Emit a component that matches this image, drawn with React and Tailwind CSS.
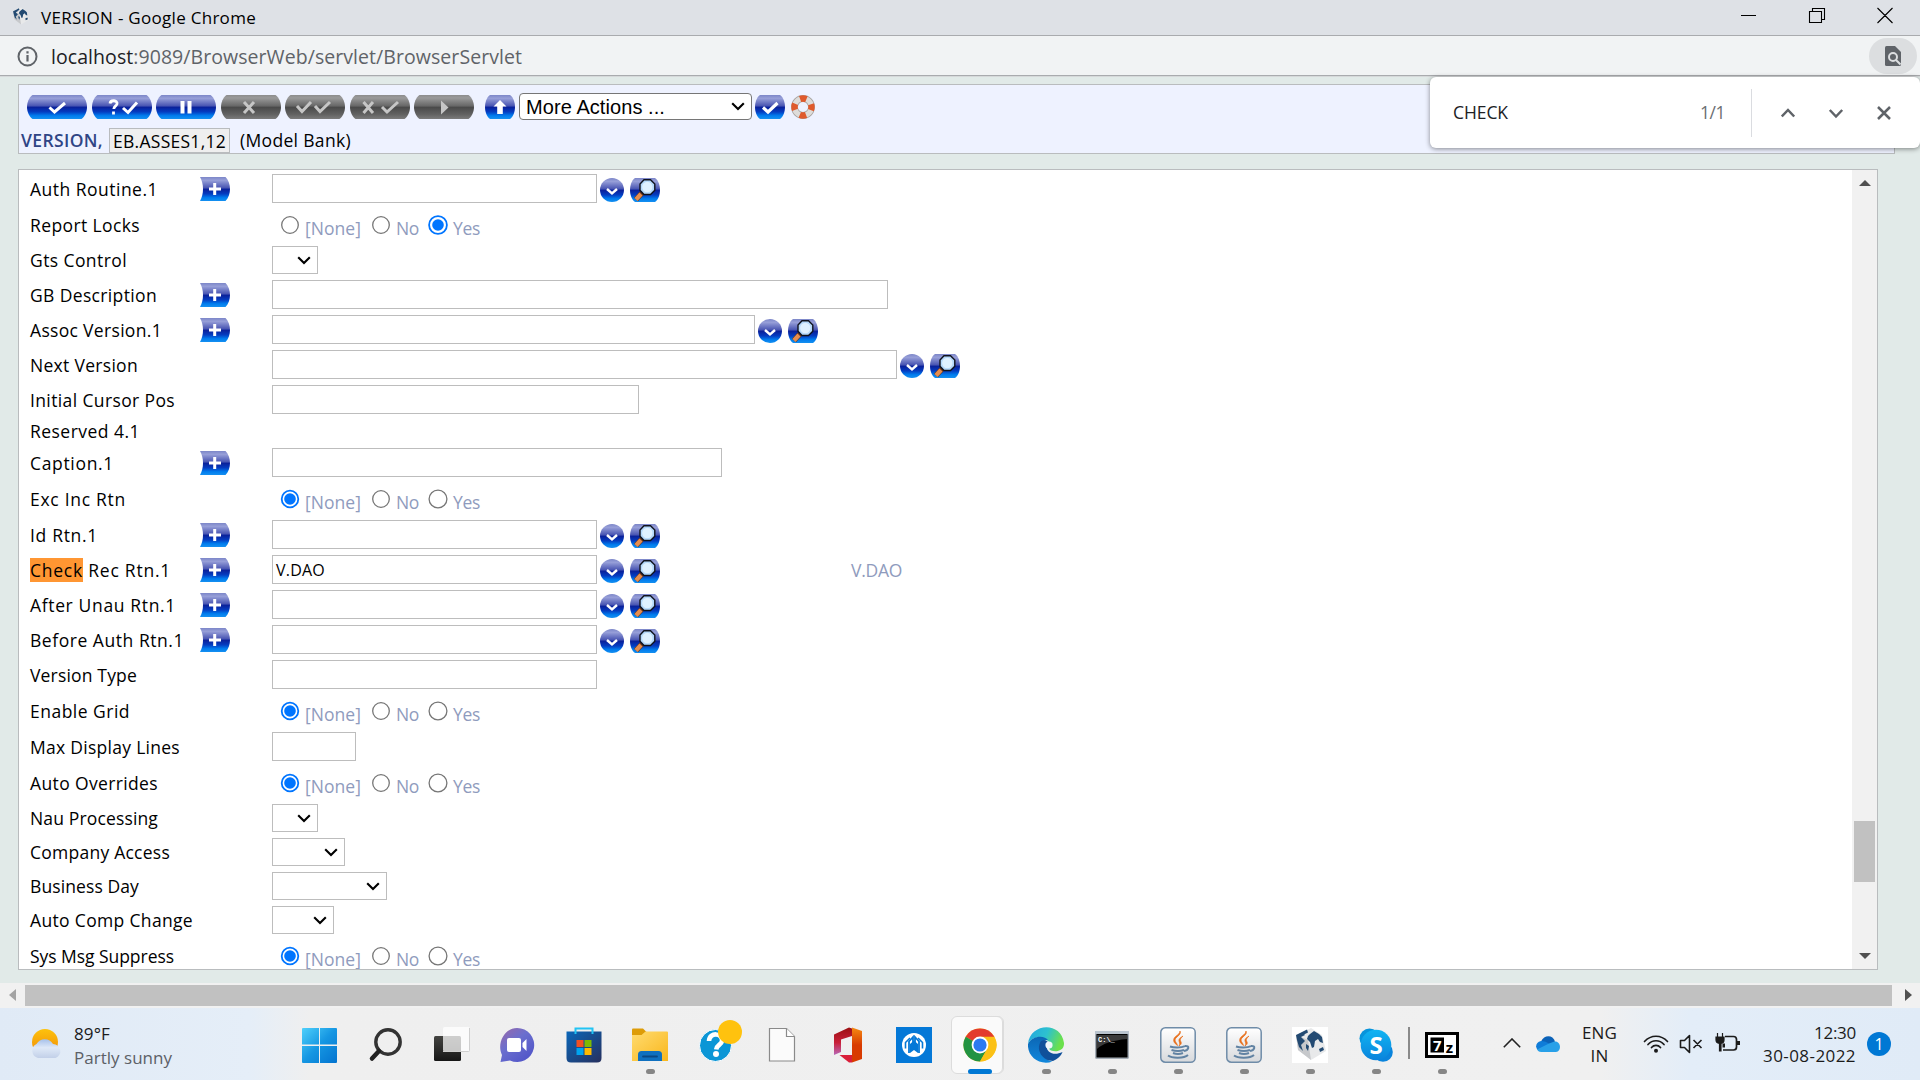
import { useLayoutEffect, useRef, useState } from "react";

/* Text tracked so that it fills a given width */
function Fit({ w, className = "", children }) {
  const ref = useRef(null);
  const [ls, setLs] = useState(0);
  useLayoutEffect(() => {
    const el = ref.current;
    const n = el.textContent.length;
    setLs((w - el.getBoundingClientRect().width) / n);
  }, [w]);
  return (
    <span ref={ref} className={"inline-block whitespace-pre " + className} style={{ letterSpacing: ls }}>
      {children}
    </span>
  );
}

function Defs() {
  return (
    <svg className="absolute h-0 w-0" aria-hidden="true">
      <defs>
        <linearGradient id="blue" x1="0" y1="0" x2="0" y2="1">
          <stop offset="0" stopColor="#7c86c8" />
          <stop offset=".14" stopColor="#979fd8" />
          <stop offset=".44" stopColor="#4c58b4" />
          <stop offset=".52" stopColor="#0a229c" />
          <stop offset=".7" stopColor="#043cc0" />
          <stop offset=".86" stopColor="#007cee" />
          <stop offset="1" stopColor="#1590f0" />
        </linearGradient>
        <linearGradient id="grey" x1="0" y1="0" x2="0" y2="1">
          <stop offset="0" stopColor="#8c8c8c" />
          <stop offset=".12" stopColor="#9a9a9a" />
          <stop offset=".45" stopColor="#686868" />
          <stop offset=".52" stopColor="#4a4a4a" />
          <stop offset=".8" stopColor="#616161" />
          <stop offset="1" stopColor="#7b7b7b" />
        </linearGradient>
        <linearGradient id="win" x1="0" y1="0" x2="1" y2="1">
          <stop offset="0" stopColor="#4fd0fb" />
          <stop offset=".5" stopColor="#1596e2" />
          <stop offset="1" stopColor="#0373cf" />
        </linearGradient>
        <linearGradient id="dark" x1="0" y1="0" x2="0" y2="1">
          <stop offset="0" stopColor="#444441" />
          <stop offset="1" stopColor="#161616" />
        </linearGradient>
        <linearGradient id="chat" x1="0" y1="0" x2=".8" y2="1">
          <stop offset="0" stopColor="#9a68a8" />
          <stop offset=".45" stopColor="#6b6fce" />
          <stop offset="1" stopColor="#5054c8" />
        </linearGradient>
        <linearGradient id="store" x1="0" y1="0" x2="1" y2="1">
          <stop offset="0" stopColor="#0a66b8" />
          <stop offset="1" stopColor="#27305e" />
        </linearGradient>
        <linearGradient id="folder" x1="0" y1="0" x2="1" y2="1">
          <stop offset="0" stopColor="#ffdb70" />
          <stop offset="1" stopColor="#f9b71c" />
        </linearGradient>
        <linearGradient id="officeL" x1="0" y1="0" x2="0" y2="1">
          <stop offset="0" stopColor="#9b0f12" />
          <stop offset=".55" stopColor="#c92039" />
          <stop offset="1" stopColor="#b868b8" />
        </linearGradient>
        <linearGradient id="officeR" x1="0" y1="0" x2="0" y2="1">
          <stop offset="0" stopColor="#f58a12" />
          <stop offset=".5" stopColor="#d83b01" />
          <stop offset="1" stopColor="#d83b01" />
        </linearGradient>
        <linearGradient id="edgeA" x1="0" y1="0" x2="1" y2=".3">
          <stop offset="0" stopColor="#22a6e0" />
          <stop offset=".55" stopColor="#2dc1cf" />
          <stop offset="1" stopColor="#6be04c" />
        </linearGradient>
        <linearGradient id="edgeB" x1="0" y1="0" x2="0" y2="1">
          <stop offset="0" stopColor="#0c66b4" />
          <stop offset="1" stopColor="#1187dc" />
        </linearGradient>
        <linearGradient id="java" x1="0" y1="0" x2="0" y2="1">
          <stop offset="0" stopColor="#ffffff" />
          <stop offset="1" stopColor="#d7d9dc" />
        </linearGradient>
        <linearGradient id="skype" x1="0" y1="0" x2="0" y2="1">
          <stop offset="0" stopColor="#10b4f2" />
          <stop offset="1" stopColor="#0a84dc" />
        </linearGradient>
        <linearGradient id="sun" x1="0" y1="0" x2="0" y2="1">
          <stop offset="0" stopColor="#fdc20c" />
          <stop offset="1" stopColor="#f08a0a" />
        </linearGradient>
        <linearGradient id="cloud" x1="0" y1="0" x2="0" y2="1">
          <stop offset="0" stopColor="#a6c0ea" />
          <stop offset=".45" stopColor="#dfe9f8" />
          <stop offset="1" stopColor="#c2d0e8" />
        </linearGradient>
      </defs>
    </svg>
  );
}

const marks = {
  tick: <path d="M22.500 12.500l5 4.500L38 8" strokeWidth="3" fill="none" />,
  help: (
    <>
      <path d="M18 8.500c.5-4 8-3.500 7 .5-.5 2-3 2-3.200 5M21.500 16.500v3" strokeWidth="2.800" fill="none" />
      <path d="M31 13l5 4.500L45 7.500" strokeWidth="3" fill="none" />
    </>
  ),
  pause: <path d="M26.500 6v12.500M33.500 6v12.500" strokeWidth="4" fill="none" />,
  cross: <path d="M23 7l10 11M33 7L23 18" strokeWidth="3" fill="none" />,
  ticks: <path d="M12 11l5 5.500L26 7M30 11l5 5.500L45 7" strokeWidth="3" fill="none" />,
  crosstick: <path d="M13.500 7l9.500 11M23 7l-9.500 11M32 12l5 5L48 7" strokeWidth="3" fill="none" />,
  play: <path d="M27 5.500L34.500 12.500L27 19.500z" stroke="none" />,
};

function Pill({ mark, off }) {
  const c = off ? "#c6c6c6" : "#fff";
  return (
    <svg width="60" height="24" viewBox="0 0 60 24">
      <path
        d="M5.500 0h49C58 2.500 60 7.500 60 12s-2 9.500-5.500 12h-49C2 21.500 0 16.500 0 12S2 2.500 5.500 0z"
        fill={off ? "url(#grey)" : "url(#blue)"}
      />
      <g stroke={c} fill={c}>{marks[mark]}</g>
    </svg>
  );
}

function Orb({ children }) {
  return (
    <svg width="30" height="24" viewBox="0 0 30 24" className="shrink-0">
      <path d="M5 0h20c3.500 2.500 5 7.500 5 12s-1.500 9.500-5 12H5C1.500 21.500 0 16.500 0 12S1.500 2.500 5 0z" fill="url(#blue)" />
      {children}
    </svg>
  );
}

const Plus = () => (
  <svg width="30" height="24" viewBox="0 0 30 24" className="mt-1.5 block">
    <path d="M0 0h25.500C28.500 3 30 7.500 30 12s-1.500 9-4.500 12H0c4-7 4-17 0-24z" fill="url(#blue)" />
    <path d="M14.700 6v12M9 12h12" stroke="#fff" strokeWidth="3" />
  </svg>
);

const Drop = () => (
  <svg width="24" height="24" viewBox="0 0 24 24" className="ml-[3px] mt-[7px] block">
    <circle cx="12" cy="12" r="12" fill="url(#blue)" />
    <path d="M7 11l5 4.500 5-4.500" fill="none" stroke="#fff" strokeWidth="2.400" />
  </svg>
);

const Lens = () => (
  <div className="ml-1.5 mt-[7px]">
    <Orb>
      <path d="M12 15l-6 6.500" stroke="#6a3416" strokeWidth="5.400" />
      <path d="M11 16l-5 5.500" stroke="#e58d50" strokeWidth="4.200" />
      <path d="M14 1.700h6.500l4.300 4.300v6.200l-4.300 4.300H14l-4-4.300V6z" fill="#b4d8fa" stroke="#10131d" strokeWidth="1.400" />
      <circle cx="17.300" cy="9" r="5.200" fill="#dff1ff" />
    </Orb>
  </div>
);

const Chevron = ({ className = "" }) => (
  <svg width="14" height="9" viewBox="0 0 14 9" className={className}>
    <path d="M1.200 1.200L7 7l5.800-5.800" fill="none" stroke="#000" strokeWidth="2.100" />
  </svg>
);

function Globe({ size }) {
  return (
    <svg width={size} height={size} viewBox="0 0 36 36" className="shrink-0">
      <path d="M4 8L19 1l11 7 4 16-15 9L6 23z" fill="#e8e9ea" />
      <path d="M4 8l12 5 3 20L6 23z" fill="#c6c8cb" />
      <path d="M4 8l6-3 3 3-4 2 4 4-4 4 2 6-4-4-2-7zM10 5l5-2.500 1 3-4 2zM18 7l4-3 5 3 3 3 1 6-3-1-2-3-3 2-1 6-2 1-2-6-3-3 1-3zM27 22l4-2 1 3-4 2zM14 17l3 2-1 5-2-3z" fill="#234a72" />
    </svg>
  );
}

function Radio({ on, big }) {
  const r = big ? 8.9 : 8.3;
  return (
    <svg width="20" height="20" viewBox="0 0 20 20" className="block shrink-0">
      <circle cx="10" cy="10" r={r} fill="#fff" stroke={on ? "#0075ff" : "#767676"} strokeWidth={on ? 1.8 : 1.3} />
      {on && <circle cx="10" cy="10" r="5.800" fill="#0075ff" />}
    </svg>
  );
}

const opt = "mt-[10px] text-[17.500px] leading-6 text-[#8f9bbd]";
function Radios({ value }) {
  return (
    <div className="flex">
      <div className="ml-2 mt-[9px]"><Radio on={value === 0} /></div>
      <div className="ml-[5px] w-[58px]"><Fit w={56} className={opt}>[None]</Fit></div>
      <div className="ml-2 mt-[9px]"><Radio on={value === 1} /></div>
      <div className="ml-[5px] w-[23px]"><Fit w={23} className={opt}>No</Fit></div>
      <div className="ml-[9px] mt-[9px]"><Radio on={value === 2} big /></div>
      <div className="ml-[5px]"><Fit w={27} className={opt}>Yes</Fit></div>
    </div>
  );
}

const rows = [
  { l: "Auth Routine.1", lw: 128, p: 1, i: 325, k: 1 },
  { l: "Report Locks", lw: 110, r: 2 },
  { l: "Gts Control", lw: 97, s: 46 },
  { l: "GB Description", lw: 127, p: 1, i: 616 },
  { l: "Assoc Version.1", lw: 132, p: 1, i: 483, k: 1 },
  { l: "Next Version", lw: 108, i: 625, k: 1 },
  { l: "Initial Cursor Pos", lw: 145, i: 367 },
  { l: "Reserved 4.1", lw: 110, t: 1 },
  { l: "Caption.1", lw: 84, p: 1, i: 450 },
  { l: "Exc Inc Rtn", lw: 96, r: 0 },
  { l: "Id Rtn.1", lw: 68, p: 1, i: 325, k: 1 },
  { l: "Check Rec Rtn.1", lw: 141, p: 1, i: 325, k: 1, v: "V.DAO" },
  { l: "After Unau Rtn.1", lw: 146, p: 1, i: 325, k: 1 },
  { l: "Before Auth Rtn.1", lw: 154, p: 1, i: 325, k: 1 },
  { l: "Version Type", lw: 107, i: 325 },
  { l: "Enable Grid", lw: 100, r: 0 },
  { l: "Max Display Lines", lw: 150, i: 84 },
  { l: "Auto Overrides", lw: 128, r: 0 },
  { l: "Nau Processing", lw: 128, s: 46 },
  { l: "Company Access", lw: 140, s: 73 },
  { l: "Business Day", lw: 109, s: 115 },
  { l: "Auto Comp Change", lw: 163, s: 62 },
  { l: "Sys Msg Suppress", lw: 144, r: 0 },
];

function Row({ d }) {
  const h = d.r !== undefined ? "h-[37px]" : d.s ? "h-[34px]" : d.t ? "h-7" : "h-[35px]";
  const top = d.t ? "mt-[2px]" : d.r !== undefined ? "mt-[7px]" : d.s ? "mt-[5px]" : "mt-1.5";
  return (
    <div className={"flex shrink-0 items-start " + h}>
      <div className="w-[170px]">
        <Fit w={d.lw} className={"text-[17.500px] leading-6 text-black " + top}>
          {d.v ? (
            <>
              <span className="bg-[#ff9632]">Check</span> Rec Rtn.1
            </>
          ) : (
            d.l
          )}
        </Fit>
      </div>
      <div className="w-[72px]">{d.p && <Plus />}</div>
      {d.r !== undefined && <Radios value={d.r} />}
      {d.s && (
        <div className="mt-[3px] flex h-7 items-center justify-end border border-[#bdbdbd] bg-white pr-[6px]" style={{ width: d.s }}>
          <Chevron />
        </div>
      )}
      {d.i && (
        <div className="mt-[3px] flex h-[29px] items-center border border-[#bdbdbd] bg-white pl-[3px]" style={{ width: d.i }}>
          {d.v && <Fit w={49} className="text-[16px] leading-6 text-black">{d.v}</Fit>}
        </div>
      )}
      {d.k && (
        <>
          <Drop />
          <Lens />
        </>
      )}
      {d.v && <Fit w={51} className="ml-[191px] mt-1.5 text-[17.500px] leading-6 text-[#8f9bbd]">V.DAO</Fit>}
    </div>
  );
}

const Java = () => (
  <svg width="36" height="36" viewBox="0 0 36 36">
    <rect x=".8" y=".8" width="34.400" height="34.400" rx="4.500" fill="url(#java)" stroke="#6f8ca8" strokeWidth="1.500" />
    <path d="M20 4c2 4-5 6-5 9 0 2 2 3 2.500 5.500C14 16 13 14 14 11.500 15.500 8.500 20 7.500 20 4zM23 9c-2 1.500-4.500 2.500-4 5 .3 1.500 1.500 2.500 0 5 3-2 2.500-3.500 1.500-5s1-3.500 2.500-5z" fill="#e8701c" stroke="#e8701c" strokeWidth=".7" />
    <path d="M10 19.500c4 1.500 11 1.500 15-.3M11.500 23c4 1.300 9 1.300 12.500 0M13 26c3 1.200 7 1.200 10 0M25 19c5-.5 4 4-1 5M8 28.500c4 3 16 3 20-.5" fill="none" stroke="#6283a3" strokeWidth="2" />
  </svg>
);

const taskIcons = [
  [<svg width="35" height="35" viewBox="0 0 35 35" className="-ml-0.5"><path d="M0 1q0-1 1-1h16v16.500H0zM18 0h16q1 0 1 1v15.500H18zM0 18h17v17H1q-1 0-1-1zM18 18h17v16q0 1-1 1H18z" fill="url(#win)" /></svg>],
  [<svg width="36" height="36" viewBox="0 0 36 36"><circle cx="20" cy="15" r="12.200" fill="none" stroke="#333" strokeWidth="3.400" /><path d="M11 24l-7 7.500" stroke="#222" strokeWidth="4.500" strokeLinecap="round" /></svg>],
  [<svg width="36" height="36" viewBox="0 0 36 36"><rect x="0" y="9" width="27" height="25" rx="1.500" fill="url(#dark)" /><rect x="9" y="0" width="27" height="24.500" rx="1.500" fill="#fff" fillOpacity=".74" /><path d="M35.500 1v22.500q0 1-1 1H9" fill="none" stroke="#cfcfcf" /></svg>],
  [<svg width="36" height="36" viewBox="0 0 36 36" className="-ml-0.5"><path d="M18 1a17 17 0 1 1-7 32.400L1.500 35 3 28C-2.500 17 5 1 18 1z" fill="url(#chat)" /><rect x="8" y="11" width="14" height="14" rx="2" fill="#fff" /><path d="M23.500 16l4-4v12l-4-4z" fill="#fff" /></svg>],
  [<svg width="36" height="36" viewBox="0 0 36 36" className="-ml-px"><path d="M.5 4.500h35V31q0 4.500-4.500 4.500H5Q.5 35.500.5 31z" fill="url(#store)" /><path d="M9.500 7V1.500h17V7" fill="none" stroke="#22c4f4" strokeWidth="2" /><path d="M10.500 13h7v7h-7z" fill="#f25022" /><path d="M18.500 13h7v7h-7z" fill="#7fba00" /><path d="M10.500 21h7v7h-7z" fill="#00a4ef" /><path d="M18.500 21h7v7h-7z" fill="#ffb900" /></svg>],
  [<svg width="36" height="36" viewBox="0 0 36 36"><path d="M0 2.500q0-1 1-1h10l3.500 3.500L10 9H0z" fill="#dd9c08" /><path d="M0 8h9.500l4-3.500H35q1 0 1 1V34H0z" fill="url(#folder)" /><path d="M6 34V27.500q0-3.500 3.500-3.500h17q3.500 0 3.500 3.500V34z" fill="#0f70bf" /><path d="M11 29.500h14" stroke="#0a4884" strokeWidth="1.800" strokeLinecap="round" /></svg>, 1],
  [<svg width="44" height="44" viewBox="0 0 44 44" className="-mt-[7px] ml-[10px]"><circle cx="16.500" cy="25.500" r="16" fill="#0b96d6" stroke="#fff" strokeWidth="1" /><path d="M10 21c.5-9.500 14-8 13 0-.5 4-5.500 4-5.800 8.500" fill="none" stroke="#fff" strokeWidth="4.600" /><circle cx="17" cy="34" r="3" fill="#fff" /><circle cx="31" cy="12" r="12" fill="#ffc20e" /></svg>],
  [<svg width="28" height="36" viewBox="0 0 28 36"><path d="M1.500 1.500h17l8 8V34h-25z" fill="#fbfbfb" stroke="#8a8a8a" strokeWidth="1.200" /><path d="M18.500 1.500v8h8" fill="#fff" stroke="#8a8a8a" strokeWidth="1.200" /></svg>],
  [<svg width="28" height="36" viewBox="0 0 28 36"><path d="M18 .5L28 4v28l-10 3.500z" fill="url(#officeR)" /><path d="M0 7.500L15 .5l3 1V9L7 12.500V25L0 28z" fill="url(#officeL)" /><path d="M5.500 28H18v7.500h-3z" fill="#d91f3a" /></svg>],
  [<svg width="36" height="36" viewBox="0 0 36 36"><rect width="36" height="36" fill="#0478d7" /><circle cx="18" cy="18" r="12" fill="#fff" /><path d="M9.500 21.500v-6l4.500-4.500M26.500 21.500v-6L22 11" fill="none" stroke="#0478d7" strokeWidth="1.600" /><path d="M13 26V14.500L17 10v8M23 26V14.500L19 10v8" fill="none" stroke="#0478d7" strokeWidth="1.800" /><path d="M14 26v-9l4-3.500 4 3.500v9l-4-3z" fill="#0478d7" /></svg>],
  [<svg width="34" height="34" viewBox="0 0 34 34"><circle cx="17" cy="17" r="16.500" fill="#fbc116" /><path d="M17 17L2.700 8.700A16.500 16.500 0 0 1 31.300 8.700z" fill="#e33b2e" /><path d="M2.700 8.700A16.500 16.500 0 0 0 17 33.500l7.300-12.400L17 17z" fill="#229342" /><path d="M17 8.700h14.300A16.500 16.500 0 0 1 17 33.500L24.500 20z" fill="#fbc116" /><circle cx="17" cy="17" r="8.400" fill="#fff" /><circle cx="17" cy="17" r="6.600" fill="#2c7af0" /></svg>, 2],
  [<svg width="36" height="36" viewBox="0 0 36 36"><path d="M0 17C2-4 33-6 36 16c.5 8-8 9.500-13 7.500-4-2 .5-4-1-7C18 9 4 8 0 17z" fill="url(#edgeA)" /><path d="M0 17c4-9 17-9 20-4-5 0-8 5-7.500 9 1 8 8 12 12 12.500C12 39-1 30 0 17z" fill="url(#edgeB)" /><path d="M13 14c-6 9 2 20 12 20 4-1.500 8-5 9.500-9-8 4-16 1-16-6 0-2 .5-3 1.500-4-2-2-5-2.500-7-1z" fill="#10509a" /><circle cx="21" cy="18" r="3.600" fill="#eef6fa" /></svg>, 1],
  [<svg width="34" height="28" viewBox="0 0 34 28"><rect x=".7" y=".7" width="32.600" height="26.600" rx="1" fill="#000" stroke="#a5adb6" strokeWidth="1.500" /><path d="M0 0h34v3H0z" fill="#b9c3cd" /><path d="M2 4h30v4Q10 10 2 18z" fill="#3a3a3a" /><text x="3" y="11" fontSize="7" fontWeight="700" fill="#fff" fontFamily="Liberation Mono">C:\_</text></svg>, 1],
  [<Java />, 1],
  [<Java />, 1],
  [<div className="bg-white"><Globe size={36} /></div>, 1],
  [<svg width="34" height="34" viewBox="0 0 34 34"><circle cx="10.500" cy="10.500" r="10" fill="#0794dc" /><circle cx="24" cy="24" r="9.800" fill="#0a84dc" /><circle cx="17" cy="17" r="15.300" fill="url(#skype)" /><text x="17" y="25.500" fontSize="24" fontWeight="700" fill="#fff" textAnchor="middle" fontFamily="Open Sans">S</text></svg>, 1],
  [<svg width="34" height="28" viewBox="0 0 34 28"><rect x="1.500" y="2.500" width="31" height="23" fill="#fff" stroke="#000" strokeWidth="3" /><rect x="5.500" y="6.500" width="13.500" height="15" fill="#000" /><text x="12.300" y="19.500" fontSize="15" fontWeight="700" fill="#fff" textAnchor="middle" fontFamily="Open Sans">7</text><text x="24.500" y="21.500" fontSize="15" fontWeight="700" fill="#000" textAnchor="middle" fontFamily="Open Sans">z</text></svg>, 1],
];

function Taskbar() {
  return (
    <div className="flex h-[72px] shrink-0 bg-[linear-gradient(90deg,#e0eaf6_0,#e5eef8_250px,#efefef_310px,#f0f0f0_1600px,#e3edf8_1690px,#e0ebf7_100%)] text-[#1b1b1b]">
      <div className="flex w-[287px] pl-[29px]">
        <svg width="35" height="34" viewBox="0 0 35 34" className="mt-5 shrink-0">
          <circle cx="16" cy="14" r="13" fill="url(#sun)" />
          <path d="M9 30a7.500 7.500 0 0 1-1.500-14A9.500 9.500 0 0 1 24 16a7.200 7.200 0 0 1 2.500 14z" fill="url(#cloud)" />
        </svg>
        <div className="ml-[10px] mt-[14px] flex flex-col items-start leading-6">
          <Fit w={36} className="text-[17px] leading-[23px]">89°F</Fit>
          <Fit w={98} className="mt-px text-[17px] leading-[23px] text-[#5c6066]">Partly sunny</Fit>
        </div>
      </div>
      <div className="flex">
        {taskIcons.map(([icon, run], i) => (
          <div
            key={i}
            className={"relative flex h-[72px] w-[66px] shrink-0 items-center justify-center pt-[2px] " + (i === 17 ? "before:absolute before:left-[-1px] before:top-[19px] before:h-8 before:w-0.5 before:bg-[#8a8a8a]" : "")}
          >
            {run === 2 && (
              <>
                <div className="absolute left-[10px] top-2 h-[58px] w-[47px] rounded-md border border-[#dcdcdc] bg-[#f3f3f3]" />
                <div className="absolute left-1 top-2 h-[58px] w-[52px] rounded-md border border-[#dcdcdc] bg-[#fafafa]" />
              </>
            )}
            <div className="relative">{icon}</div>
            {run === 1 && <div className="absolute bottom-[6px] h-[5px] w-[9px] rounded-full bg-[#868686]" />}
            {run === 2 && <div className="absolute bottom-[6px] left-[21px] h-[5px] w-6 rounded-full bg-[#0078d4]" />}
          </div>
        ))}
      </div>
      <div className="flex pl-7">
        <svg width="18" height="10" viewBox="0 0 18 10" className="mt-[30px] shrink-0"><path d="M.8 9.200L9 1l8.200 8.200" fill="none" stroke="#222" strokeWidth="1.600" /></svg>
        <svg width="24" height="16" viewBox="0 0 24 16" className="ml-[15px] mt-7 shrink-0">
          <path d="M5 5.500C8-1.500 17-1.500 19 5.500L12 11z" fill="#0b62b8" />
          <path d="M5 5q4-.5 8 2.500L4 15.500C-1.500 13.500-1 6 5 5z" fill="#0f7cd8" />
          <path d="M18.500 5.500C25 5 26 15 20 16H5q-3-.5-4-2.500L13 7.500z" fill="#28a0e8" />
        </svg>
        <div className="ml-[18px] mt-[13px] flex w-[43px] flex-col items-center text-[17px] leading-[23px]">
          <Fit w={35}>ENG</Fit>
          <Fit w={18}>IN</Fit>
        </div>
        <svg width="26" height="20" viewBox="0 0 26 20" className="ml-[22px] mt-[26px] shrink-0">
          <g fill="none" stroke="#1b1b1b" strokeWidth="1.700" strokeLinecap="round">
            <path d="M1.500 7.500c6.500-7 16.500-7 23 0M5 10.500c4.500-5 11.500-5 16 0M8.500 13.500c2.500-2.800 6.500-2.800 9 0" />
          </g>
          <circle cx="13" cy="16.800" r="2" fill="#1b1b1b" />
        </svg>
        <svg width="24" height="20" viewBox="0 0 24 20" className="ml-[10px] mt-[26px] shrink-0">
          <path d="M1.500 6.500h4l5-5v17l-5-5h-4zM14.500 6l8 8M22.500 6l-8 8" fill="none" stroke="#1b1b1b" strokeWidth="1.600" strokeLinejoin="round" />
        </svg>
        <svg width="26" height="20" viewBox="0 0 26 20" className="ml-3 mt-[25px] shrink-0">
          <path d="M10 3.500h8.500q3 0 3 3V14q0 3-3 3H8" fill="none" stroke="#1b1b1b" strokeWidth="1.700" />
          <path d="M1 4h8v3q0 3-3 3.500V18H4.500v-7.500Q1 10 1 7zM2.500 0v4M7.500 0v4" fill="#1b1b1b" stroke="#1b1b1b" strokeWidth="1.200" />
          <path d="M7.500 10.500h2.500v4H7.500zM22 8h3v4h-3z" fill="#1b1b1b" />
        </svg>
        <div className="ml-[14px] mt-[13px] flex w-[101px] flex-col items-end text-[17px] leading-[23px]">
          <Fit w={42}>12:30</Fit>
          <Fit w={93}>30-08-2022</Fit>
        </div>
        <div className="ml-[11px] mt-6 flex h-6 w-6 items-center justify-center rounded-full bg-[#0078d4] text-[16px] text-white">1</div>
      </div>
    </div>
  );
}

export default function App() {
  return (
    <div className="relative flex h-[1080px] w-[1920px] flex-col overflow-hidden bg-[#e1eae8] font-['Open_Sans',sans-serif]">
      <Defs />
      <div className="flex h-9 shrink-0 items-start border-b border-[#a9abae] bg-[#dee1e6] pl-[11px]">
        <div className="mt-[7px]"><Globe size={19} /></div>
        <Fit w={215} className="ml-[11px] mt-[6px] text-[17px] leading-6 text-black">VERSION - Google Chrome</Fit>
        <svg width="152" height="17" viewBox="0 0 152 17" className="ml-auto mr-[27px] mt-[7px]">
          <path d="M0 8.500h15M68.500 4.500h12v11h-12zM71.500 4.500v-3h12v11h-3M136.500 1l15 15M151.500 1l-15 15" fill="none" stroke="#000" strokeWidth="1.100" />
        </svg>
      </div>
      <div className="flex h-[41px] shrink-0 items-start bg-[#f1f3f4] shadow-[inset_0_-1px_0_#d6d9da,inset_0_-2px_0_#a9abae]">
        <svg width="21" height="21" viewBox="0 0 21 21" className="ml-[17px] mt-[10px]">
          <circle cx="10.500" cy="10.500" r="9" fill="none" stroke="#5f6368" strokeWidth="2" />
          <path d="M10.500 9v6.500M10.500 5.200v2.300" stroke="#5f6368" strokeWidth="2.200" />
        </svg>
        <Fit w={471} className="ml-[13px] mt-[7px] text-[19.500px] leading-7 text-[#5f6368]">
          <span className="text-[#202124]">localhost</span>:9089/BrowserWeb/servlet/BrowserServlet
        </Fit>
        <div className="ml-auto mr-[3px] mt-[2px] flex h-9 w-12 items-center justify-center rounded-full bg-[#dcdee0]">
          <svg width="16" height="20" viewBox="0 0 16 20">
            <path d="M1.500 0H10l6 6v12.500q0 1.500-1.500 1.500h-13Q0 20 0 18.500v-17Q0 0 1.500 0z" fill="#5f6368" />
            <circle cx="8" cy="11" r="4" fill="none" stroke="#dcdee0" strokeWidth="2" />
            <path d="M11 14l4.500 4.500" stroke="#dcdee0" strokeWidth="2" />
          </svg>
        </div>
      </div>

      <div className="ml-[18px] mt-[7px] h-[70px] w-[1877px] shrink-0 border border-[#b9bcbe] bg-[#eef2ff]">
        <div className="flex h-[43px] items-start pl-2 pt-[10px]">
          <div className="flex gap-[4.500px]">
            <Pill mark="tick" />
            <Pill mark="help" />
            <Pill mark="pause" />
            <Pill mark="cross" off />
            <Pill mark="ticks" off />
            <Pill mark="crosstick" off />
            <Pill mark="play" off />
          </div>
          <div className="ml-[11px]">
            <Orb><path d="M15 5l6.500 6.500h-3.700V19h-5.600v-7.500H8.500z" fill="#fff" /></Orb>
          </div>
          <div className="-mt-[2px] ml-1 flex h-[27px] w-[233px] items-center justify-between rounded-[4px] border border-[#767676] bg-white pl-1.5 pr-[6px]">
            <Fit w={139} className="font-['Liberation_Sans',Arial,sans-serif] text-[20px] leading-6 text-black">More Actions ...</Fit>
            <Chevron />
          </div>
          <div className="ml-[3px]">
            <Orb><path d="M8 12.500l5 4.500 9.500-9" fill="none" stroke="#fff" strokeWidth="3.200" /></Orb>
          </div>
          <svg width="24" height="24" viewBox="0 0 24 24" className="ml-1.5">
            <circle cx="12" cy="12" r="8.500" fill="none" stroke="#a8a5a2" strokeWidth="6.800" />
            <circle cx="12" cy="12" r="8.500" fill="none" stroke="#dedcd9" strokeWidth="5.200" />
            <circle cx="12" cy="12" r="8.500" fill="none" stroke="#df5a2c" strokeWidth="6.400" strokeDasharray="6.400 6.952" strokeDashoffset="3.200" />
          </svg>
        </div>
        <div className="flex items-start pl-[2px] text-[17.500px] leading-6">
          <Fit w={82} className="font-semibold text-[#2f4585]">VERSION,</Fit>
          <div className="ml-[6px] flex h-[25px] w-[121px] justify-center border border-[#b9bcbe] bg-[#efefef]"><Fit w={113} className="text-black">EB.ASSES1,12</Fit></div>
          <Fit w={111} className="ml-[10px] text-black">(Model Bank)</Fit>
        </div>
      </div>

      <div className="ml-[18px] mt-[15px] flex h-[801px] w-[1860px] shrink-0 overflow-hidden border border-[#b9bcbe] bg-white">
        <div className="flex flex-1 flex-col overflow-hidden pl-[11px] pt-px">
          {rows.map((d) => <Row key={d.l} d={d} />)}
        </div>
        <div className="flex w-[25px] flex-col items-center bg-[#f1f1f1] pb-[10px] pt-[10px]">
          <svg width="12" height="6" viewBox="0 0 12 6"><path d="M0 6l6-6 6 6z" fill="#505050" /></svg>
          <div className="mt-[635px] h-[61px] w-[21px] bg-[#c1c1c1]" />
          <svg width="12" height="6" viewBox="0 0 12 6" className="mt-auto"><path d="M0 0l6 6 6-6z" fill="#505050" /></svg>
        </div>
      </div>

      <div className="mt-auto flex h-[25px] shrink-0 items-center bg-[#f1f1f1] pb-px">
        <svg width="7" height="12" viewBox="0 0 7 12" className="ml-[9px]"><path d="M7 0L0 6l7 6z" fill="#a3a3a3" /></svg>
        <div className="ml-[9px] h-[21px] w-[1867px] bg-[#c1c1c1]" />
        <svg width="7" height="12" viewBox="0 0 7 12" className="ml-[13px]"><path d="M0 0l7 6-7 6z" fill="#505050" /></svg>
      </div>
      <Taskbar />

      {/* find-in-page bubble floating over the page */}
      <div className="absolute left-[1430px] top-[77px] flex h-[71px] w-[490px] items-center rounded-[6px] bg-white pl-[23px] shadow-[0_1px_5px_rgba(0,0,0,0.45)]">
        <Fit w={55} className="-mt-px text-[17.500px] leading-6 text-[#202124]">CHECK</Fit>
        <Fit w={25} className="-mt-px ml-[192px] text-[17.500px] leading-6 text-[#6b6e72]">1/1</Fit>
        <div className="ml-[26px] h-12 w-px bg-[#dadce0]" />
        <svg width="110" height="14" viewBox="0 0 110 14" className="ml-[29px]">
          <path d="M.8 10.500L7 4l6.200 6.500M48.800 4L55 10.500 61.200 4M97 1l12 12M109 1L97 13" fill="none" stroke="#5f6368" strokeWidth="2.500" />
        </svg>
      </div>
    </div>
  );
}
